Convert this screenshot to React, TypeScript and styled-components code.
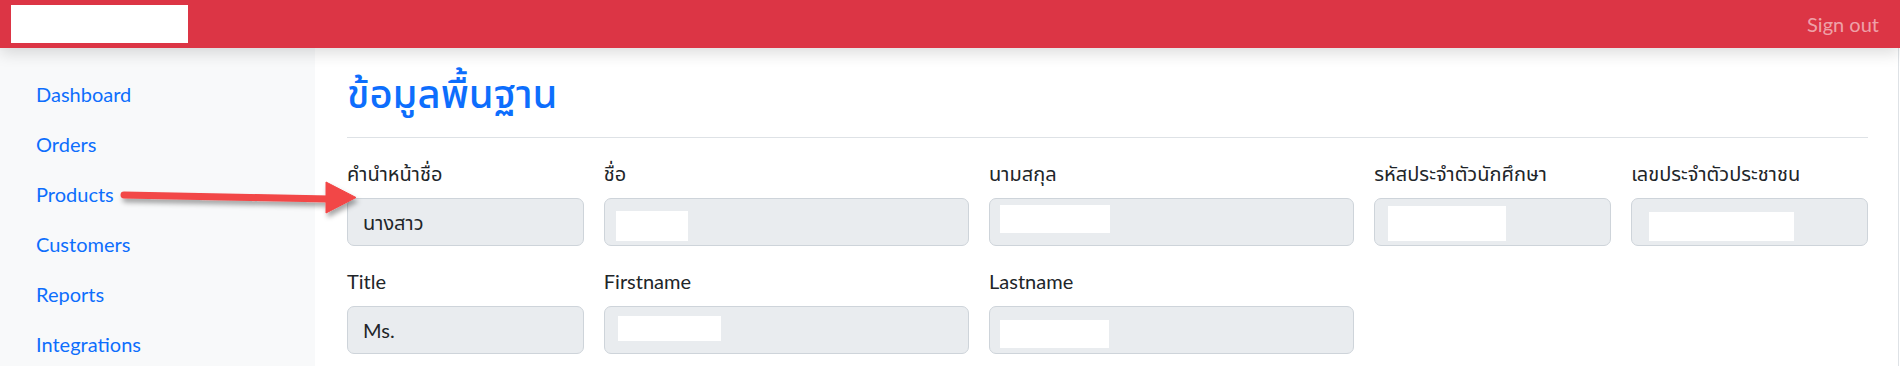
import styled, { createGlobalStyle } from 'styled-components'

const GlobalStyle = createGlobalStyle`
  html, body {
    margin: 0;
    padding: 0;
    height: 366px;
    overflow: hidden;
    background: #fff;
  }
  body {
    font-family: Lato, "Noto Sans Thai", "Noto Sans", "DejaVu Sans", sans-serif;
    font-size: 20px;
    color: #212529;
  }
`

const Page = styled.div`
  position: relative;
  width: 1900px;
  height: 366px;
  display: flex;
  flex-direction: column;
`

const TopBar = styled.header`
  position: relative;
  z-index: 2;
  flex: 0 0 48px;
  display: flex;
  align-items: center;
  justify-content: space-between;
  padding: 0 21px 0 11px;
  background: #dc3545;
  box-shadow: 0 5px 16px rgba(0, 0, 0, 0.14);
`

const Brand = styled.div`
  width: 177px;
  height: 38px;
  background: #fff;
`

const SignOut = styled.a`
  color: rgba(255, 255, 255, 0.55);
  font-size: 20px;
  line-height: 30px;
  text-decoration: none;
`

const Body = styled.div`
  flex: 1;
  display: flex;
  min-height: 0;
`

const Sidebar = styled.nav`
  flex: 0 0 315px;
  background: #f8f9fa;
  padding: 21px 0 0 16px;
  box-sizing: border-box;
`

const NavList = styled.ul`
  list-style: none;
  margin: 0;
  padding: 0;
`

const NavLink = styled.a`
  display: block;
  padding: 10px 20px;
  line-height: 30px;
  color: #0d6efd;
  text-decoration: none;
`

const Main = styled.main`
  flex: 1;
  padding: 0 30px 0 32px;
  margin-right: 1px;
  border-right: 1px solid #dee2e6;
`

const PageHeader = styled.div`
  padding: 21px 0 10px;
  margin-bottom: 20px;
  border-bottom: 1px solid #dee2e6;
`

const Heading = styled.h1`
  margin: 0 0 10px;
  font-size: 40px;
  line-height: 48px;
  font-weight: 500;
  color: #0d6efd;
`

const FormGrid = styled.div`
  display: grid;
  grid-template-columns: repeat(12, 1fr);
  column-gap: 20px;
  row-gap: 20px;
`

const FormGroup = styled.div<{ $span: number }>`
  grid-column: span ${p => p.$span};
`

const Label = styled.label`
  display: block;
  margin-bottom: 10px;
  line-height: 30px;
`

const Field = styled.div`
  position: relative;
  height: 48px;
  box-sizing: border-box;
  display: flex;
  align-items: center;
  padding: 0 15px;
  background: #e9ecef;
  border: 1px solid #ced4da;
  border-radius: 7px;
  line-height: 30px;
`

// white redaction boxes pasted over the personal values
const Mask = styled.span<{ $x: number; $y: number; $w: number; $h: number }>`
  position: absolute;
  left: ${p => p.$x}px;
  top: ${p => p.$y}px;
  width: ${p => p.$w}px;
  height: ${p => p.$h}px;
  background: #fff;
`

const Annotation = styled.svg`
  position: absolute;
  left: 0;
  top: 0;
  pointer-events: none;
  z-index: 3;
`

const navItems = ['Dashboard', 'Orders', 'Products', 'Customers', 'Reports', 'Integrations']

type Item = {
  span: number
  label: string
  value?: string
  mask?: [number, number, number, number]
}

const fields: Item[] = [
  { span: 2, label: 'คำนำหน้าชื่อ', value: 'นางสาว' },
  { span: 3, label: 'ชื่อ', mask: [11, 12, 72, 30] },
  { span: 3, label: 'นามสกุล', mask: [10, 6, 110, 28] },
  { span: 2, label: 'รหัสประจำตัวนักศึกษา', mask: [13, 7, 118, 35] },
  { span: 2, label: 'เลขประจำตัวประชาชน', mask: [17, 13, 145, 29] },
  { span: 2, label: 'Title', value: 'Ms.' },
  { span: 3, label: 'Firstname', mask: [13, 9, 103, 25] },
  { span: 3, label: 'Lastname', mask: [10, 13, 109, 28] },
]

export default function App() {
  return (
    <Page>
      <GlobalStyle />
      <TopBar>
        <Brand />
        <SignOut href="#">Sign out</SignOut>
      </TopBar>
      <Body>
        <Sidebar>
          <NavList>
            {navItems.map(item => (
              <li key={item}>
                <NavLink href="#">{item}</NavLink>
              </li>
            ))}
          </NavList>
        </Sidebar>
        <Main>
          <PageHeader>
            <Heading>ข้อมูลพื้นฐาน</Heading>
          </PageHeader>
          <FormGrid>
            {fields.map(f => (
              <FormGroup key={f.label} $span={f.span}>
                <Label>{f.label}</Label>
                <Field>
                  {f.value}
                  {f.mask && <Mask $x={f.mask[0]} $y={f.mask[1]} $w={f.mask[2]} $h={f.mask[3]} />}
                </Field>
              </FormGroup>
            ))}
          </FormGrid>
        </Main>
      </Body>
      <Annotation width="1900" height="366" viewBox="0 0 1900 366">
        <defs>
          <filter id="arrowShadow" x="-10%" y="-50%" width="120%" height="200%">
            <feDropShadow dx="2" dy="4" stdDeviation="2.5" floodColor="#000" floodOpacity="0.35" />
          </filter>
        </defs>
        <g filter="url(#arrowShadow)" fill="#f24646" stroke="#f24646">
          <path d="M124 195 L330 199" strokeWidth="7" strokeLinecap="round" fill="none" />
          <polygon points="326,182 356,197.5 326,213" strokeWidth="1" strokeLinejoin="round" />
        </g>
      </Annotation>
    </Page>
  )
}
